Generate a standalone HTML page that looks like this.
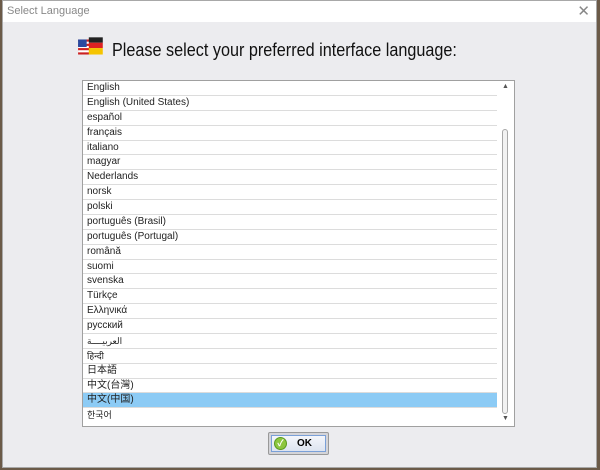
<!DOCTYPE html>
<html><head><style>
*{margin:0;padding:0;box-sizing:border-box}
body{width:600px;height:470px;background:#6b5a48;position:relative;overflow:hidden;font-family:"Liberation Sans","Noto Sans CJK SC",sans-serif}
.dlg{position:absolute;left:2px;top:0;width:595px;height:468px;background:#ececef;border:1px solid #a8a8a8}
.title{height:21px;background:#fff;font-size:11px;color:#888;padding:4px 0 0 4px;position:relative}
.x{position:absolute;right:6px;top:1px;font-size:15px;color:#888}
.head{position:absolute;left:109px;top:39px;font-size:18px;color:#111;transform:scaleX(0.9);transform-origin:left top;white-space:nowrap}
.flag{position:absolute;left:74px;top:35px;width:29px;height:22px}
.list{position:absolute;left:82px;top:80px;width:433px;height:347px;background:#fff;border:1px solid #a0a0a0}
.row{height:14.88px;border-bottom:1px solid #dcdcdc;font-size:10px;line-height:14px;padding-left:4px;color:#222;width:414px}
.sel{background:#8ccbf5}
.sb{position:absolute;right:1px;top:0;width:15px;height:345px;background:#fff}
.thumb{position:absolute;left:4px;top:48px;width:6px;height:285px;border:1px solid #a8a8a8;border-radius:3px;background:#f2f2f2}
.ok{position:absolute;left:268px;top:432px;width:61px;height:23px;border:1px solid #999;border-radius:2px;background:#d4d4d8;padding:2px}
.ok div{width:100%;height:100%;background:linear-gradient(#f4f6fb,#dde4f0);border:1px solid #7aa0d8;font-size:10px;font-weight:bold;text-align:center;line-height:15px;padding-left:12px;position:relative}
.ok span{position:absolute;left:2px;top:1px;width:13px;height:13px;border-radius:50%;background:#8cc63f;border:1px solid #5a9a20;color:#fff;font-size:9px;line-height:11px;padding:0}
</style></head><body>
<div class="dlg">
<div class="title">Select Language<span class="x">✕</span></div>
<svg class="flag" viewBox="0 0 27 20"><rect x="1" y="3" width="12" height="14" fill="#c22"/><rect x="1" y="5" width="12" height="2" fill="#fff"/><rect x="1" y="9" width="12" height="2" fill="#fff"/><rect x="1" y="13" width="12" height="2" fill="#fff"/><rect x="1" y="3" width="8" height="7" fill="#2a4aa0"/><rect x="11" y="1" width="13" height="5" fill="#222"/><rect x="11" y="6" width="13" height="5" fill="#d22"/><rect x="11" y="11" width="13" height="6" fill="#f5c400"/></svg>
<div class="head">Please select your preferred interface language:</div>
</div>
<div class="list">
<div class="row">English</div><div class="row">English (United States)</div><div class="row">español</div><div class="row">français</div><div class="row">italiano</div><div class="row">magyar</div><div class="row">Nederlands</div><div class="row">norsk</div><div class="row">polski</div><div class="row">português (Brasil)</div><div class="row">português (Portugal)</div><div class="row">română</div><div class="row">suomi</div><div class="row">svenska</div><div class="row">Türkçe</div><div class="row">Ελληνικά</div><div class="row">русский</div><div class="row" style="font-size:9px">العربيــــة</div><div class="row" style="font-size:9px">हिन्दी</div><div class="row">日本語</div><div class="row">中文(台灣)</div><div class="row sel">中文(中国)</div><div class="row" style="font-size:9px;border:none">한국어</div>
<div class="sb"><div style="position:absolute;left:4px;top:2px;font-size:7px;color:#555">▲</div><div class="thumb"></div><div style="position:absolute;left:4px;top:334px;font-size:7px;color:#555">▼</div></div>
</div>
<div class="ok"><div><span>✓</span>OK</div></div>
</body></html>
